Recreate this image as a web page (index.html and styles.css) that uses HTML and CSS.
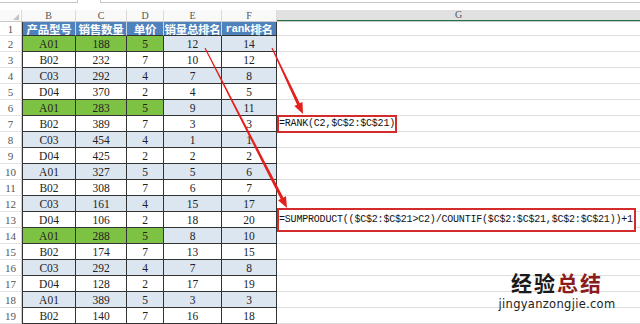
FILE: index.html
```html
<!DOCTYPE html>
<html lang="zh-CN">
<head>
<meta charset="utf-8">
<title>Sheet</title>
<link rel="stylesheet" href="styles.css">
</head>
<body>
<div class="app">
  <div class="topbar"><div class="namebox"></div><div class="fbar"></div></div>
  <div class="row colhdr">
    <div class="corner"><span class="tri"></span></div>
    <div>B</div><div>C</div><div>D</div><div>E</div><div>F</div><div class="sel">G</div>
  </div>
  <div class="row head">
    <div class="rh">1</div>
    <div class="c b">产品型号</div><div class="c">销售数量</div><div class="c">单价</div><div class="c">销量总排名</div><div class="c"><span class="lat">rank</span>排名</div><div class="g"></div>
  </div>
  <div class="row alt hl"><div class="rh">2</div><div class="c b">A01</div><div class="c">188</div><div class="c">5</div><div class="c">12</div><div class="c">14</div><div class="g"></div></div>
  <div class="row"><div class="rh">3</div><div class="c b">B02</div><div class="c">232</div><div class="c">7</div><div class="c">10</div><div class="c">12</div><div class="g"></div></div>
  <div class="row alt"><div class="rh">4</div><div class="c b">C03</div><div class="c">292</div><div class="c">4</div><div class="c">7</div><div class="c">8</div><div class="g"></div></div>
  <div class="row"><div class="rh">5</div><div class="c b">D04</div><div class="c">370</div><div class="c">2</div><div class="c">4</div><div class="c">5</div><div class="g"></div></div>
  <div class="row alt hl"><div class="rh">6</div><div class="c b">A01</div><div class="c">283</div><div class="c">5</div><div class="c">9</div><div class="c">11</div><div class="g"></div></div>
  <div class="row"><div class="rh">7</div><div class="c b">B02</div><div class="c">389</div><div class="c">7</div><div class="c">3</div><div class="c">3</div><div class="g"><span class="formula f1">=RANK(C2,$C$2:$C$21)</span></div></div>
  <div class="row alt"><div class="rh">8</div><div class="c b">C03</div><div class="c">454</div><div class="c">4</div><div class="c">1</div><div class="c">1</div><div class="g"></div></div>
  <div class="row"><div class="rh">9</div><div class="c b">D04</div><div class="c">425</div><div class="c">2</div><div class="c">2</div><div class="c">2</div><div class="g"></div></div>
  <div class="row alt"><div class="rh">10</div><div class="c b">A01</div><div class="c">327</div><div class="c">5</div><div class="c">5</div><div class="c">6</div><div class="g"></div></div>
  <div class="row"><div class="rh">11</div><div class="c b">B02</div><div class="c">308</div><div class="c">7</div><div class="c">6</div><div class="c">7</div><div class="g"></div></div>
  <div class="row alt"><div class="rh">12</div><div class="c b">C03</div><div class="c">161</div><div class="c">4</div><div class="c">15</div><div class="c">17</div><div class="g"></div></div>
  <div class="row"><div class="rh">13</div><div class="c b">D04</div><div class="c">106</div><div class="c">2</div><div class="c">18</div><div class="c">20</div><div class="g"><span class="formula f2">=SUMPRODUCT(($C$2:$C$21&gt;C2)/COUNTIF($C$2:$C$21,$C$2:$C$21))+1</span></div></div>
  <div class="row alt hl"><div class="rh">14</div><div class="c b">A01</div><div class="c">288</div><div class="c">5</div><div class="c">8</div><div class="c">10</div><div class="g"></div></div>
  <div class="row"><div class="rh">15</div><div class="c b">B02</div><div class="c">174</div><div class="c">7</div><div class="c">13</div><div class="c">15</div><div class="g"></div></div>
  <div class="row alt"><div class="rh">16</div><div class="c b">C03</div><div class="c">292</div><div class="c">4</div><div class="c">7</div><div class="c">8</div><div class="g"></div></div>
  <div class="row"><div class="rh">17</div><div class="c b">D04</div><div class="c">128</div><div class="c">2</div><div class="c">17</div><div class="c">19</div><div class="g"></div></div>
  <div class="row alt"><div class="rh">18</div><div class="c b">A01</div><div class="c">389</div><div class="c">5</div><div class="c">3</div><div class="c">3</div><div class="g"></div></div>
  <div class="row"><div class="rh">19</div><div class="c b">B02</div><div class="c">140</div><div class="c">7</div><div class="c">16</div><div class="c">18</div><div class="g"></div></div>

  <svg class="arrows" width="640" height="324" viewBox="0 0 640 324">
    <polygon points="271.46,48.25 297.04,104.63 294.31,105.89 303,114 302.49,102.11 299.76,103.37 272.54,47.75"/>
    <polygon points="204.47,48.27 280.67,198.88 278.0,200.25 287,208 286.0,196.15 283.34,197.52 205.53,47.73"/>
  </svg>

  <div class="watermark">
    <div class="wm-cn"><span class="wm-k">经验</span><span class="wm-r">总结</span></div>
    <div class="wm-en">jingyanzongjie.com</div>
  </div>
</div>
</body>
</html>
```

FILE: styles.css
```css
* { box-sizing: border-box; margin: 0; padding: 0; }
html, body { width: 640px; height: 324px; overflow: hidden; background: #fff; }
body { font-family: "Liberation Serif", "Noto Sans CJK SC", serif; color: #222; }

.app { position: relative; width: 640px; height: 324px; overflow: hidden; background: #fff; }

.topbar { height: 10px; display: flex; }
.namebox { width: 78px; height: 3px; border-right: 1px solid #c6c6c6; border-bottom: 1px solid #c6c6c6; }
.fbar { flex: 1; margin-left: 22px; height: 3px; border-left: 1px solid #c6c6c6; border-bottom: 1px solid #c6c6c6; }

.row {
  display: grid;
  grid-template-columns: 22px 54px 51px 37px 58px 55px 1fr;
  grid-template-rows: 100%;
  height: 16px;
}
.row > div { display: flex; align-items: center; justify-content: center; overflow: visible; min-height: 0; }

/* column header */
.colhdr { height: 12px; background: #f9f9f9; border-bottom: 1px solid #c9c9c9; }
.colhdr > div { font-size: 10px; color: #555; border-right: 1px solid #dadada; line-height: 1; }
.colhdr .corner { position: relative; }
.tri { position: absolute; right: 2px; bottom: 1px; width: 0; height: 0; border-left: 6px solid transparent; border-bottom: 6px solid #c4c4c4; }
.colhdr .sel { background: #e1e1e1; border-bottom: 1px solid #217346; border-right: none; }

/* row header */
.rh { font-size: 11px; color: #555; border-bottom: 1px solid #e3e3e3; border-right: 1px solid #cfcfcf; }

/* data cells */
.c { font-size: 11.5px; color: #222; border-right: 1px solid #333; border-bottom: 1px solid #333; background: #fff; }
.c.b { border-left: 1px solid #333; }
.alt .c { background: #dce6f1; }
.hl .c:nth-child(-n+4) { background: #7dc243; }
.g { border-bottom: 1px solid #dedede; justify-content: flex-start !important; }

/* header row */
.head { height: 14px; }
.head .c {
  background: #4f81bd;
  color: #fff;
  font-family: "Noto Sans CJK SC", sans-serif;
  font-weight: 700;
  font-size: 11.5px;
  border-right-color: #c9d6e8;
  white-space: nowrap;
  letter-spacing: -0.3px;
}
.head .c.b { border-left-color: #333; }
.head .c:nth-child(6) { border-right-color: #333; }
.lat { font-family: "Liberation Mono", monospace; font-weight: 700; font-size: 11px; letter-spacing: -0.4px; }

/* formula boxes */
.formula {
  position: relative;
  z-index: 2;
  flex: none;
  display: flex;
  align-items: center;
  background: #fff;
  border: 2px solid #d42b2b;
  font-family: "Liberation Mono", monospace;
  font-size: 10px;
  letter-spacing: -0.2px;
  color: #111;
  padding-left: 0;
  white-space: nowrap;
}
.f1 { width: 120px; height: 18px; }
.f2 { width: 359px; height: 24px; }

/* arrows overlay */
.arrows { position: absolute; left: 0; top: 0; z-index: 3; pointer-events: none; }
.arrows polygon { fill: #e3201e; }

/* watermark */
.watermark {
  position: absolute;
  left: 486px;
  top: 271px;
  width: 142px;
  z-index: 4;
  display: flex;
  flex-direction: column;
  align-items: center;
}
.wm-cn { font-family: "Noto Sans CJK SC", sans-serif; font-weight: 700; font-size: 21px; line-height: 23px; letter-spacing: 2px; }
.wm-k { color: #1a1a1a; }
.wm-r { color: #8b1d1d; }
.wm-en { font-family: "DejaVu Sans", sans-serif; font-size: 11.5px; line-height: 14px; color: #222; letter-spacing: 0.3px; margin-top: 3px; }
```
